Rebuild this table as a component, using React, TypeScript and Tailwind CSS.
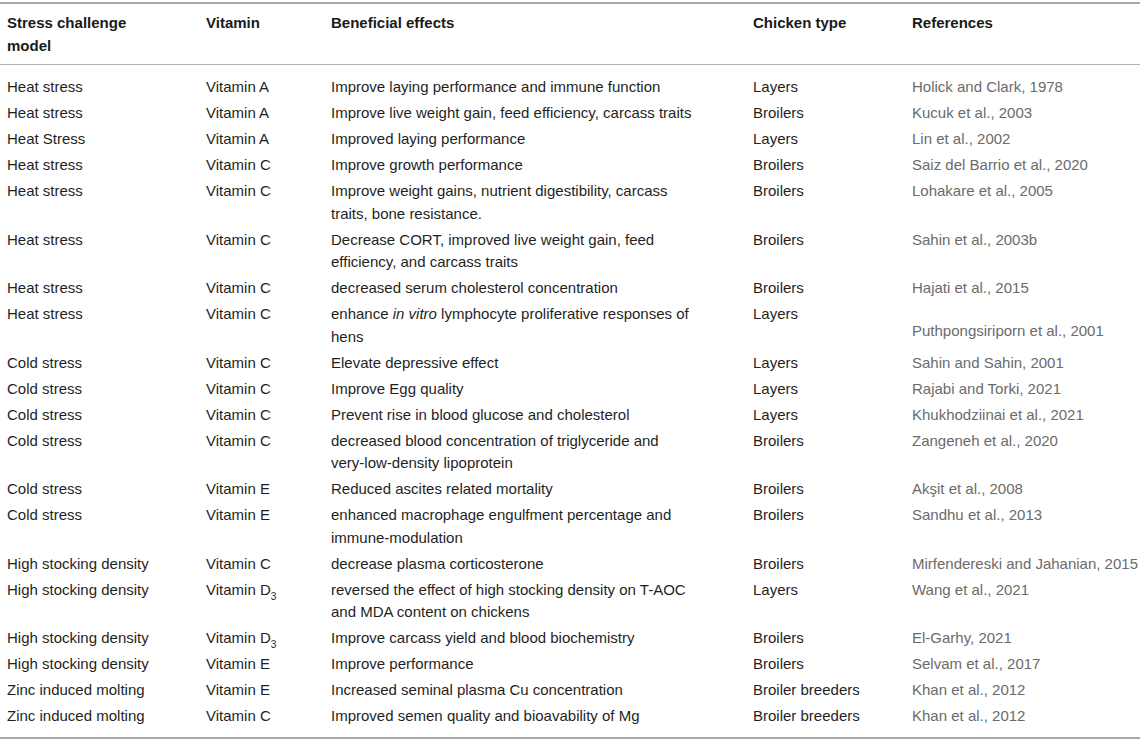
import React from "react";

type Row = {
  model: string;
  vitamin: React.ReactNode;
  effect: React.ReactNode;
  type: string;
  ref: string;
  refOffset?: boolean;
};

const D3 = (
  <>
    Vitamin D<sub className="text-[10px] relative top-[1px] align-sub leading-none">3</sub>
  </>
);

const rows: Row[] = [
  { model: "Heat stress", vitamin: "Vitamin A", effect: "Improve laying performance and immune function", type: "Layers", ref: "Holick and Clark, 1978" },
  { model: "Heat stress", vitamin: "Vitamin A", effect: "Improve live weight gain, feed efficiency, carcass traits", type: "Broilers", ref: "Kucuk et al., 2003" },
  { model: "Heat Stress", vitamin: "Vitamin A", effect: "Improved laying performance", type: "Layers", ref: "Lin et al., 2002" },
  { model: "Heat stress", vitamin: "Vitamin C", effect: "Improve growth performance", type: "Broilers", ref: "Saiz del Barrio et al., 2020" },
  { model: "Heat stress", vitamin: "Vitamin C", effect: (<>Improve weight gains, nutrient digestibility, carcass<br />traits, bone resistance.</>), type: "Broilers", ref: "Lohakare et al., 2005" },
  { model: "Heat stress", vitamin: "Vitamin C", effect: (<>Decrease CORT, improved live weight gain, feed<br />efficiency, and carcass traits</>), type: "Broilers", ref: "Sahin et al., 2003b" },
  { model: "Heat stress", vitamin: "Vitamin C", effect: "decreased serum cholesterol concentration", type: "Broilers", ref: "Hajati et al., 2015" },
  { model: "Heat stress", vitamin: "Vitamin C", effect: (<>enhance <i>in vitro</i> lymphocyte proliferative responses of<br />hens</>), type: "Layers", ref: "Puthpongsiriporn et al., 2001", refOffset: true },
  { model: "Cold stress", vitamin: "Vitamin C", effect: "Elevate depressive effect", type: "Layers", ref: "Sahin and Sahin, 2001" },
  { model: "Cold stress", vitamin: "Vitamin C", effect: "Improve Egg quality", type: "Layers", ref: "Rajabi and Torki, 2021" },
  { model: "Cold stress", vitamin: "Vitamin C", effect: "Prevent rise in blood glucose and cholesterol", type: "Layers", ref: "Khukhodziinai et al., 2021" },
  { model: "Cold stress", vitamin: "Vitamin C", effect: (<>decreased blood concentration of triglyceride and<br />very-low-density lipoprotein</>), type: "Broilers", ref: "Zangeneh et al., 2020" },
  { model: "Cold stress", vitamin: "Vitamin E", effect: "Reduced ascites related mortality", type: "Broilers", ref: "Akşit et al., 2008" },
  { model: "Cold stress", vitamin: "Vitamin E", effect: (<>enhanced macrophage engulfment percentage and<br />immune-modulation</>), type: "Broilers", ref: "Sandhu et al., 2013" },
  { model: "High stocking density", vitamin: "Vitamin C", effect: "decrease plasma corticosterone", type: "Broilers", ref: "Mirfendereski and Jahanian, 2015" },
  { model: "High stocking density", vitamin: D3, effect: (<>reversed the effect of high stocking density on T-AOC<br />and MDA content on chickens</>), type: "Layers", ref: "Wang et al., 2021" },
  { model: "High stocking density", vitamin: D3, effect: "Improve carcass yield and blood biochemistry", type: "Broilers", ref: "El-Garhy, 2021" },
  { model: "High stocking density", vitamin: "Vitamin E", effect: "Improve performance", type: "Broilers", ref: "Selvam et al., 2017" },
  { model: "Zinc induced molting", vitamin: "Vitamin E", effect: "Increased seminal plasma Cu concentration", type: "Broiler breeders", ref: "Khan et al., 2012" },
  { model: "Zinc induced molting", vitamin: "Vitamin C", effect: "Improved semen quality and bioavability of Mg", type: "Broiler breeders", ref: "Khan et al., 2012" },
];

const cols = "grid grid-cols-[199px_125px_422px_159px_1fr]";

export default function App() {
  return (
    <div
      className="w-[1143px] h-[741px] bg-white text-[15px] leading-[22.5px] text-[#1f1f1f] pt-[2px]"
      style={{ fontFamily: '"Liberation Sans", Arial, Helvetica, sans-serif' }}
    >
      <div className="w-[1140px]">
        <div className="h-[2px] bg-[#a8a8a8]" />
        <div className={`${cols} px-[7px] pt-[8px] pb-[7px] font-bold text-[#1a1a1a] border-b border-[#b0b0b0]`}>
          <div>Stress challenge<br />model</div>
          <div>Vitamin</div>
          <div>Beneficial effects</div>
          <div>Chicken type</div>
          <div>References</div>
        </div>
        <div className="pt-[9px] pb-[8px] border-b-2 border-[#a8a8a8]">
          {rows.map((r, i) => (
            <div key={i} className={`${cols} px-[7px] pt-[2px] pb-[1.5px]`}>
              <div className="whitespace-nowrap">{r.model}</div>
              <div className="whitespace-nowrap">{r.vitamin}</div>
              <div className="whitespace-nowrap">{r.effect}</div>
              <div className="whitespace-nowrap">{r.type}</div>
              <div className={`whitespace-nowrap text-[#6b6b6b] ${r.refOffset ? "pt-[17px]" : ""}`}>{r.ref}</div>
            </div>
          ))}
        </div>
      </div>
    </div>
  );
}
